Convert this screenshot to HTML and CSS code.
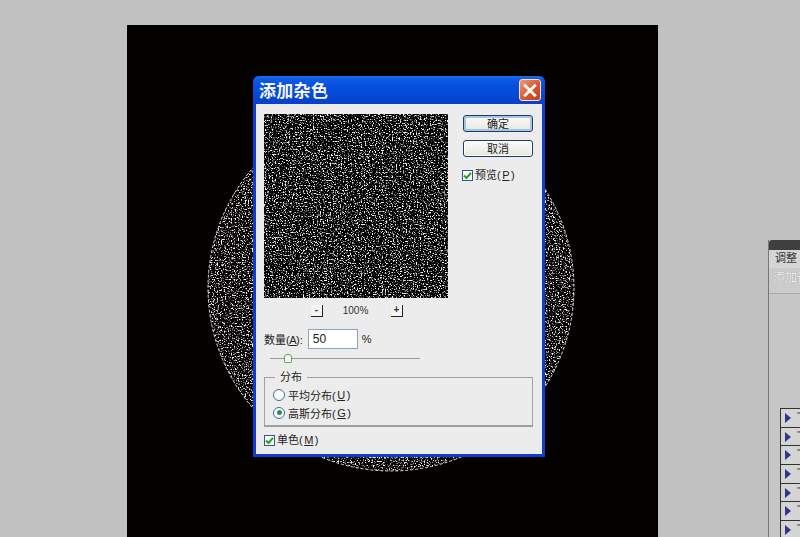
FILE: index.html
```html
<!DOCTYPE html>
<html lang="zh">
<head>
<meta charset="utf-8">
<title>添加杂色</title>
<link rel="stylesheet" href="styles.css">
</head>
<body>
<svg class="defs" width="0" height="0" aria-hidden="true">
  <defs>
    <filter id="grain" x="0" y="0" width="100%" height="100%" color-interpolation-filters="sRGB">
      <feTurbulence type="fractalNoise" baseFrequency="0.71 0.77" numOctaves="3" seed="23" result="n"/>
      <feColorMatrix in="n" type="matrix" values="0 0 0 0 1  0 0 0 0 1  0 0 0 0 1  5 0 0 0 -2.62" result="s"/>
      <feGaussianBlur in="s" stdDeviation="0.36"/>
    </filter>
  </defs>
</svg>

<main class="doc">
  <svg class="doc-art" width="531" height="512" viewBox="0 0 531 512" aria-hidden="true">
    <defs><clipPath id="disc"><circle cx="264" cy="263" r="183"/></clipPath></defs>
    <g clip-path="url(#disc)">
      <rect x="70" y="70" width="390" height="390" fill="#000" filter="url(#grain)"/>
    </g>
    <circle cx="264" cy="263" r="183" fill="none" stroke="#ddd" stroke-width="1" stroke-dasharray="3 2"/>
  </svg>
</main>

<aside class="panel">
  <div class="panel-head"></div>
  <div class="panel-tab">调整</div>
  <div class="panel-sub">添加调</div>
  <div class="panel-space"></div>
  <ul class="layers">
    <li><span class="tri"></span><i>"</i></li>
    <li><span class="tri"></span><i>"</i></li>
    <li><span class="tri"></span><i>"</i></li>
    <li><span class="tri"></span><i>"</i></li>
    <li><span class="tri"></span><i>"</i></li>
    <li><span class="tri"></span><i>"</i></li>
    <li><span class="tri"></span><i>"</i></li>
  </ul>
</aside>

<section class="dialog">
  <header class="titlebar">
    <h1>添加杂色</h1>
    <button class="close" aria-label="关闭">
      <svg width="21" height="21" viewBox="0 0 21 21"><path d="M5.5 5.5l10 10M15.5 5.5l-10 10" stroke="#fff" stroke-width="3" stroke-linecap="square" fill="none"/></svg>
    </button>
  </header>
  <div class="body">
    <div class="top">
      <div class="preview-col">
        <svg class="preview" width="184" height="184" aria-hidden="true">
          <rect width="184" height="184" fill="#000"/>
          <rect width="184" height="184" filter="url(#grain)"/>
        </svg>
        <div class="zoom">
          <span class="zoom-btn">-</span>
          <span class="zoom-val">100%</span>
          <span class="zoom-btn">+</span>
        </div>
      </div>
      <div class="side">
        <button class="btn btn-default">确定</button>
        <button class="btn">取消</button>
        <label class="check side-check"><span class="box"><svg width="9" height="9" viewBox="0 0 9 9"><path d="M1 4.5l2.5 2.5L8 1.8" fill="none" stroke="#21a121" stroke-width="2"/></svg></span>预览(<u>P</u>)</label>
      </div>
    </div>
    <div class="amount">
      <span>数量(<u>A</u>):</span>
      <span class="input">50</span>
      <span class="pct">%</span>
    </div>
    <div class="slider"><span class="thumb"></span></div>
    <fieldset class="group">
      <legend>分布</legend>
      <label class="radio"><span class="dot"></span>平均分布(<u>U</u>)</label>
      <label class="radio"><span class="dot on"></span>高斯分布(<u>G</u>)</label>
    </fieldset>
    <label class="check"><span class="box"><svg width="9" height="9" viewBox="0 0 9 9"><path d="M1 4.5l2.5 2.5L8 1.8" fill="none" stroke="#21a121" stroke-width="2"/></svg></span>单色(<u>M</u>)</label>
  </div>
</section>
</body>
</html>
```
FILE: styles.css
```css
* { box-sizing: border-box; }
html, body { margin: 0; height: 100%; }
body {
  position: relative;
  width: 800px;
  height: 537px;
  overflow: hidden;
  background: #c1c1c1;
  font-family: "Liberation Sans", "Noto Sans CJK SC", sans-serif;
  font-size: 11px;
  color: #222;
}
u { margin: 0 -0.5px; }
.defs { position: absolute; }

.doc {
  position: absolute;
  left: 127px;
  top: 25px;
  width: 531px;
  height: 512px;
  background: #030000;
}
.doc-art { display: block; }

.panel {
  position: absolute;
  left: 768px;
  top: 240px;
  width: 32px;
  height: 297px;
  overflow: hidden;
  background: #c6c6c6;
  border-left: 1px solid #777;
}
.panel-head { height: 10px; background: #3f3f3f; border-radius: 3px 0 0 0; }
.panel-tab { height: 18px; line-height: 17px; padding-left: 6px; background: #d5d5d5; color: #333; white-space: nowrap; }
.panel-sub { height: 26px; padding: 0 0 0 4px; color: #f0f0f0; background: #cbcbcb; border-bottom: 1px solid #aaa; text-shadow: 0 0 1px #888; font-size: 12px; white-space: nowrap; overflow: hidden; }
.panel-space { height: 114px; }
.layers {
  list-style: none;
  margin: 0 0 0 11px;
  padding: 0;
  border: 1px solid #333;
  border-right: 0;
  background: #d4d4d4;
}
.layers li {
  display: flex;
  align-items: center;
  gap: 6px;
  height: 18.7px;
  padding-left: 4px;
  border-bottom: 1px solid #333;
}
.layers i { font-style: normal; font-size: 9px; color: #444; margin-top: -6px; }
.tri {
  width: 0; height: 0;
  border-left: 6px solid #33338a;
  border-top: 5px solid transparent;
  border-bottom: 5px solid transparent;
}

.dialog {
  position: absolute;
  left: 253px;
  top: 76px;
  width: 292px;
  height: 381px;
  display: flex;
  flex-direction: column;
  background: #0a3fd2;
  border-radius: 6px 6px 0 0;
  padding: 0 3px 3px;
}
.titlebar {
  flex: none;
  height: 28px;
  margin: 0 -3px;
  padding: 0 4px 0 6px;
  display: flex;
  align-items: center;
  justify-content: space-between;
  border-radius: 6px 6px 0 0;
  background: linear-gradient(#1f6ff0 0, #0f5be6 3px, #0650dc 10px, #0546d2 22px, #0a3fc8 100%);
}
.titlebar h1 {
  margin: 0;
  padding-top: 4px;
  font-size: 17px;
  font-weight: 700;
  color: #f4f4f4;
  letter-spacing: 0.3px;
  line-height: 24px;
}
.close {
  width: 22px;
  height: 22px;
  padding: 0;
  border: 1px solid #f0e0d8;
  border-radius: 3px;
  background: linear-gradient(135deg, #ee9a70, #d9532a 60%, #c43f18);
  display: flex;
  align-items: center;
  justify-content: center;
}
.body {
  flex: 1;
  background: #ececec;
  padding: 10px 8px 0;
  display: flex;
  flex-direction: column;
}
.top { display: flex; gap: 15px; }
.preview-col { width: 184px; }
.preview { display: block; }
.zoom {
  display: flex;
  justify-content: center;
  align-items: center;
  gap: 10px;
  height: 24px;
  padding: 1px 0 0 2px;
  color: #333;
  font-size: 10px;
}
.zoom-val { width: 48px; padding-right: 3px; text-align: center; }
.zoom-btn {
  width: 12px;
  height: 12px;
  line-height: 9px;
  text-align: center;
  font-weight: 700;
  border-right: 1px solid #222;
  border-bottom: 1px solid #222;
  background: #f4f4f4;
}
.side { padding-top: 1px; width: 72px; display: flex; flex-direction: column; align-items: flex-start; }
.btn {
  width: 70px;
  height: 17px;
  padding: 0;
  margin-bottom: 8px;
  border: 1px solid #1b3d66;
  border-radius: 3px;
  background: linear-gradient(#fbfbfb, #e6e6e0);
  font: inherit;
  line-height: 14px;
  color: #222;
  box-shadow: inset 0 0 0 1px #fff;
}
.btn-default { box-shadow: inset 0 0 0 2px #a9c3e6; }
.check { display: flex; align-items: center; gap: 2px; line-height: 12px; padding-top: 1px; }
.side-check { margin: 3px 0 0 -1px; }
.box {
  width: 11px;
  height: 11px;
  border: 1px solid #2d5a86;
  background: #fff;
  display: flex;
  align-items: center;
  justify-content: center;
}
.amount {
  display: flex;
  align-items: center;
  margin-top: 7px;
  height: 20px;
}
.input {
  width: 50px;
  height: 20px;
  margin-left: 5px;
  padding-left: 4px;
  background: #fff;
  border: 1px solid #8aa4c0;
  font-size: 12px;
  line-height: 18px;
}
.pct { margin-left: 4px; }
.slider {
  position: relative;
  height: 1px;
  width: 150px;
  margin: 9px 0 0 6px;
  background: #999;
}
.thumb {
  position: absolute;
  left: 14px;
  top: -4px;
  width: 8px;
  height: 9px;
  background: #f3fbf3;
  border: 1px solid #6f9a6f;
  border-radius: 3px 3px 1px 1px;
}
.group {
  margin: 12px 0 0;
  padding: 2px 0 0 8px;
  width: 269px;
  height: 56px;
  border: 1px solid #a0a0a0;
  border-width: 1px 1px 2px;
  min-inline-size: 0;
}
.group legend { padding: 0 5px; margin-left: 2px; line-height: 12px; height: 12px; }
.radio { display: flex; align-items: center; gap: 2px; height: 18px; padding-top: 1px; }
.dot {
  position: relative;
  width: 12px;
  height: 12px;
  border: 1px solid #466a8e;
  border-radius: 50%;
  background: #fff;
  margin-right: 1px;
}
.dot.on::after {
  content: "";
  position: absolute;
  left: 2.5px;
  top: 2.5px;
  width: 5px;
  height: 5px;
  border-radius: 50%;
  background: #2f8f4a;
}
.body > .check { margin-top: 6px; }
```
